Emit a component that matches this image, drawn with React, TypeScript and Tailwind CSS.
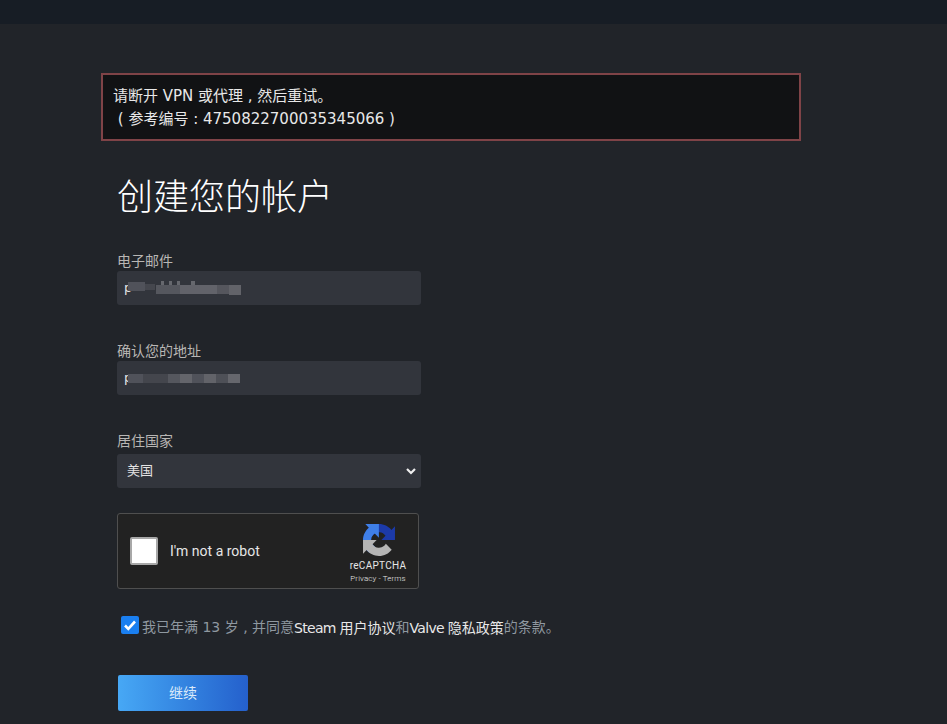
import React from "react";

const FONT = "font-['DejaVu_Sans','Noto_Sans_CJK_SC',sans-serif]";

function Blur({ blocks }: { blocks: [number, number, number, number, string][] }) {
  return (
    <span className="absolute left-0 top-0 h-full w-full pointer-events-none">
      {blocks.map(([l, t, w, h, c], i) => (
        <span key={i} className="absolute" style={{ left: l, top: t, width: w, height: h, background: c }} />
      ))}
    </span>
  );
}

function Field({ label, value, blocks, mt }: { label: string; value: string; blocks: [number, number, number, number, string][]; mt: string }) {
  return (
    <div className={mt}>
      <div className="h-[20px] text-[14px] leading-[20px] text-[#b8b6b4]">{label}</div>
      <div className="relative flex h-[34px] w-[304px] items-center rounded-[3px] bg-[#32353c] pl-[7px] text-[13px] text-[#e4e4e4]">
        {value}
        <Blur blocks={blocks} />
      </div>
    </div>
  );
}

export default function App() {
  return (
    <div className={`${FONT} h-[724px] w-[947px] overflow-hidden bg-[#212429]`}>
      <div className="h-[24px] bg-[#171d25]" />
      <div className="pl-[101px] pt-[49px]">
        <div className="h-[68px] w-[700px] border-2 border-[#7f4347] bg-[#111214] pl-[10px] pt-[10px] text-[15px] leading-[23px] text-[#e8e8e8]">
          <div>请断开 VPN 或代理 , 然后重试。</div>
          <div>{"\u00a0"}( 参考编号 : 4750822700035345066 )</div>
        </div>
        <div className="ml-[16px]">
          <h1 className="mt-[33px] h-[48px] text-[36px] font-light leading-[48px] text-white">创建您的帐户</h1>
          <Field
            mt="mt-[29px]"
            label="电子邮件"
            value="p"
            blocks={[
              [11, 11, 17, 9, "#50525a"],
              [28, 13, 10, 6, "#45474e"],
              [39, 14, 24, 9, "#55575e"],
              [63, 14, 37, 9, "#62636a"],
              [100, 14, 12, 9, "#55565d"],
              [112, 14, 12, 10, "#626369"],
              [44, 10, 3, 4, "#66686e"],
              [52, 10, 3, 4, "#66686e"],
              [60, 10, 3, 4, "#66686e"],
              [74, 10, 4, 4, "#66686e"],
            ]}
          />
          <Field
            mt="mt-[36px]"
            label="确认您的地址"
            value="p"
            blocks={[
              [11, 13, 15, 9, "#50525a"],
              [26, 13, 25, 9, "#44464d"],
              [51, 13, 12, 9, "#55575e"],
              [63, 13, 12, 9, "#64656b"],
              [75, 13, 12, 9, "#50525a"],
              [87, 13, 12, 9, "#626369"],
              [99, 13, 12, 9, "#4e5057"],
              [111, 13, 12, 9, "#66676d"],
            ]}
          />
          <div className="mt-[36px]">
            <div className="h-[23px] text-[14px] leading-[20px] text-[#b8b6b4]">居住国家</div>
            <div className="flex h-[34px] w-[304px] items-center justify-between rounded-[3px] bg-[#32353c] pl-[10px] pr-[4px] text-[13px] text-[#e4e4e4]">
              <span>美国</span>
              <svg width="12" height="12" viewBox="0 0 12 12" fill="none">
                <path d="M2 4l4 4 4-4" stroke="#eeeeee" strokeWidth="2.2" />
              </svg>
            </div>
          </div>
          <div className="mt-[25px] flex h-[76px] w-[302px] items-center justify-between rounded-[3px] border border-[#4f4f4f] bg-[#222222] pl-[12px] pr-[11px] font-['Roboto',sans-serif]">
            <div className="flex items-center">
              <div className="h-[28px] w-[28px] rounded-[2px] border-2 border-[#a8a8a8] bg-white" />
              <div className="ml-[12px] text-[14px] text-[#e6e6e6]">I'm not a robot</div>
            </div>
            <div className="mt-[10px] flex w-[58px] flex-col items-center self-start">
              <svg width="32" height="32" viewBox="0 0 64 64" className="ml-[2px]">
                <path d="M64 31.955l-.033-1.37V4.687l-7.16 7.16C50.948 4.674 42.033.093 32.05.093c-10.4 0-19.622 4.96-25.458 12.64l11.736 11.86a15.55 15.55 0 0 1 4.754-5.334c2.05-1.6 4.952-2.906 8.968-2.906.485 0 .86.057 1.135.163 4.976.393 9.288 3.14 11.828 7.124l-8.307 8.307c10.522-.04 22.4-.066 27.295.003" fill="#1c3aa9" />
                <path d="M31.862.094l-1.37.033H4.594l7.16 7.16C4.58 13.147 0 22.06 0 32.046c0 10.4 4.96 19.622 12.64 25.458l11.86-11.736a15.55 15.55 0 0 1-5.334-4.754c-1.6-2.05-2.906-4.952-2.906-8.968 0-.485.057-.86.163-1.135.393-4.976 3.14-9.288 7.124-11.828l8.307 8.307c-.04-10.522-.066-22.4.003-27.295" fill="#3f7fe8" />
                <path d="M.001 32.045l.033 1.37v25.898l7.16-7.16c5.86 7.173 14.774 11.754 24.76 11.754 10.4 0 19.622-4.96 25.458-12.64l-11.736-11.86a15.55 15.55 0 0 1-4.754 5.334c-2.05 1.6-4.952 2.906-8.968 2.906-.485 0-.86-.057-1.135-.163-4.976-.393-9.288-3.14-11.828-7.124l8.307-8.307c-10.522.04-22.4.066-27.295-.003" fill="#b5b5b5" />
              </svg>
              <div className="mt-[3px] text-[10px] leading-[13px] tracking-[0.3px] text-[#e6e6e6]">reCAPTCHA</div>
              <div className="whitespace-nowrap text-[8px] font-light leading-[13px] tracking-[0.1px] text-[#e6e6e6]">Privacy - Terms</div>
            </div>
          </div>
          <div className="ml-[4px] mt-[27px] flex h-[18px] items-center text-[14px] text-[#8f98a0]">
            <div className="flex h-[18px] w-[18px] items-center justify-center rounded-[2px] bg-[#1a7ff0]">
              <svg width="14" height="14" viewBox="0 0 14 14" fill="none">
                <path d="M2 7.500l3.300 3.300L12 3.500" stroke="#ffffff" strokeWidth="2.600" />
              </svg>
            </div>
            <span className="ml-[3px] whitespace-nowrap pt-[5px]">
              我已年满 13 岁 , 并同意
              <span className="align-[-1px] tracking-[-0.7px] text-[#e8e8e8]">Steam </span>
              <span className="align-[-1px] text-[#e8e8e8]">用户协议</span>和
              <span className="align-[-1px] tracking-[-0.7px] text-[#e8e8e8]">Valve </span>
              <span className="align-[-1px] text-[#e8e8e8]">隐私政策</span>的条款。
            </span>
          </div>
          <button className="ml-[1px] mt-[41px] h-[36px] w-[130px] rounded-[2px] bg-gradient-to-r from-[#47a8f5] to-[#2560cc] text-[14px] text-[#dbeafa]">
            继续
          </button>
        </div>
      </div>
    </div>
  );
}
